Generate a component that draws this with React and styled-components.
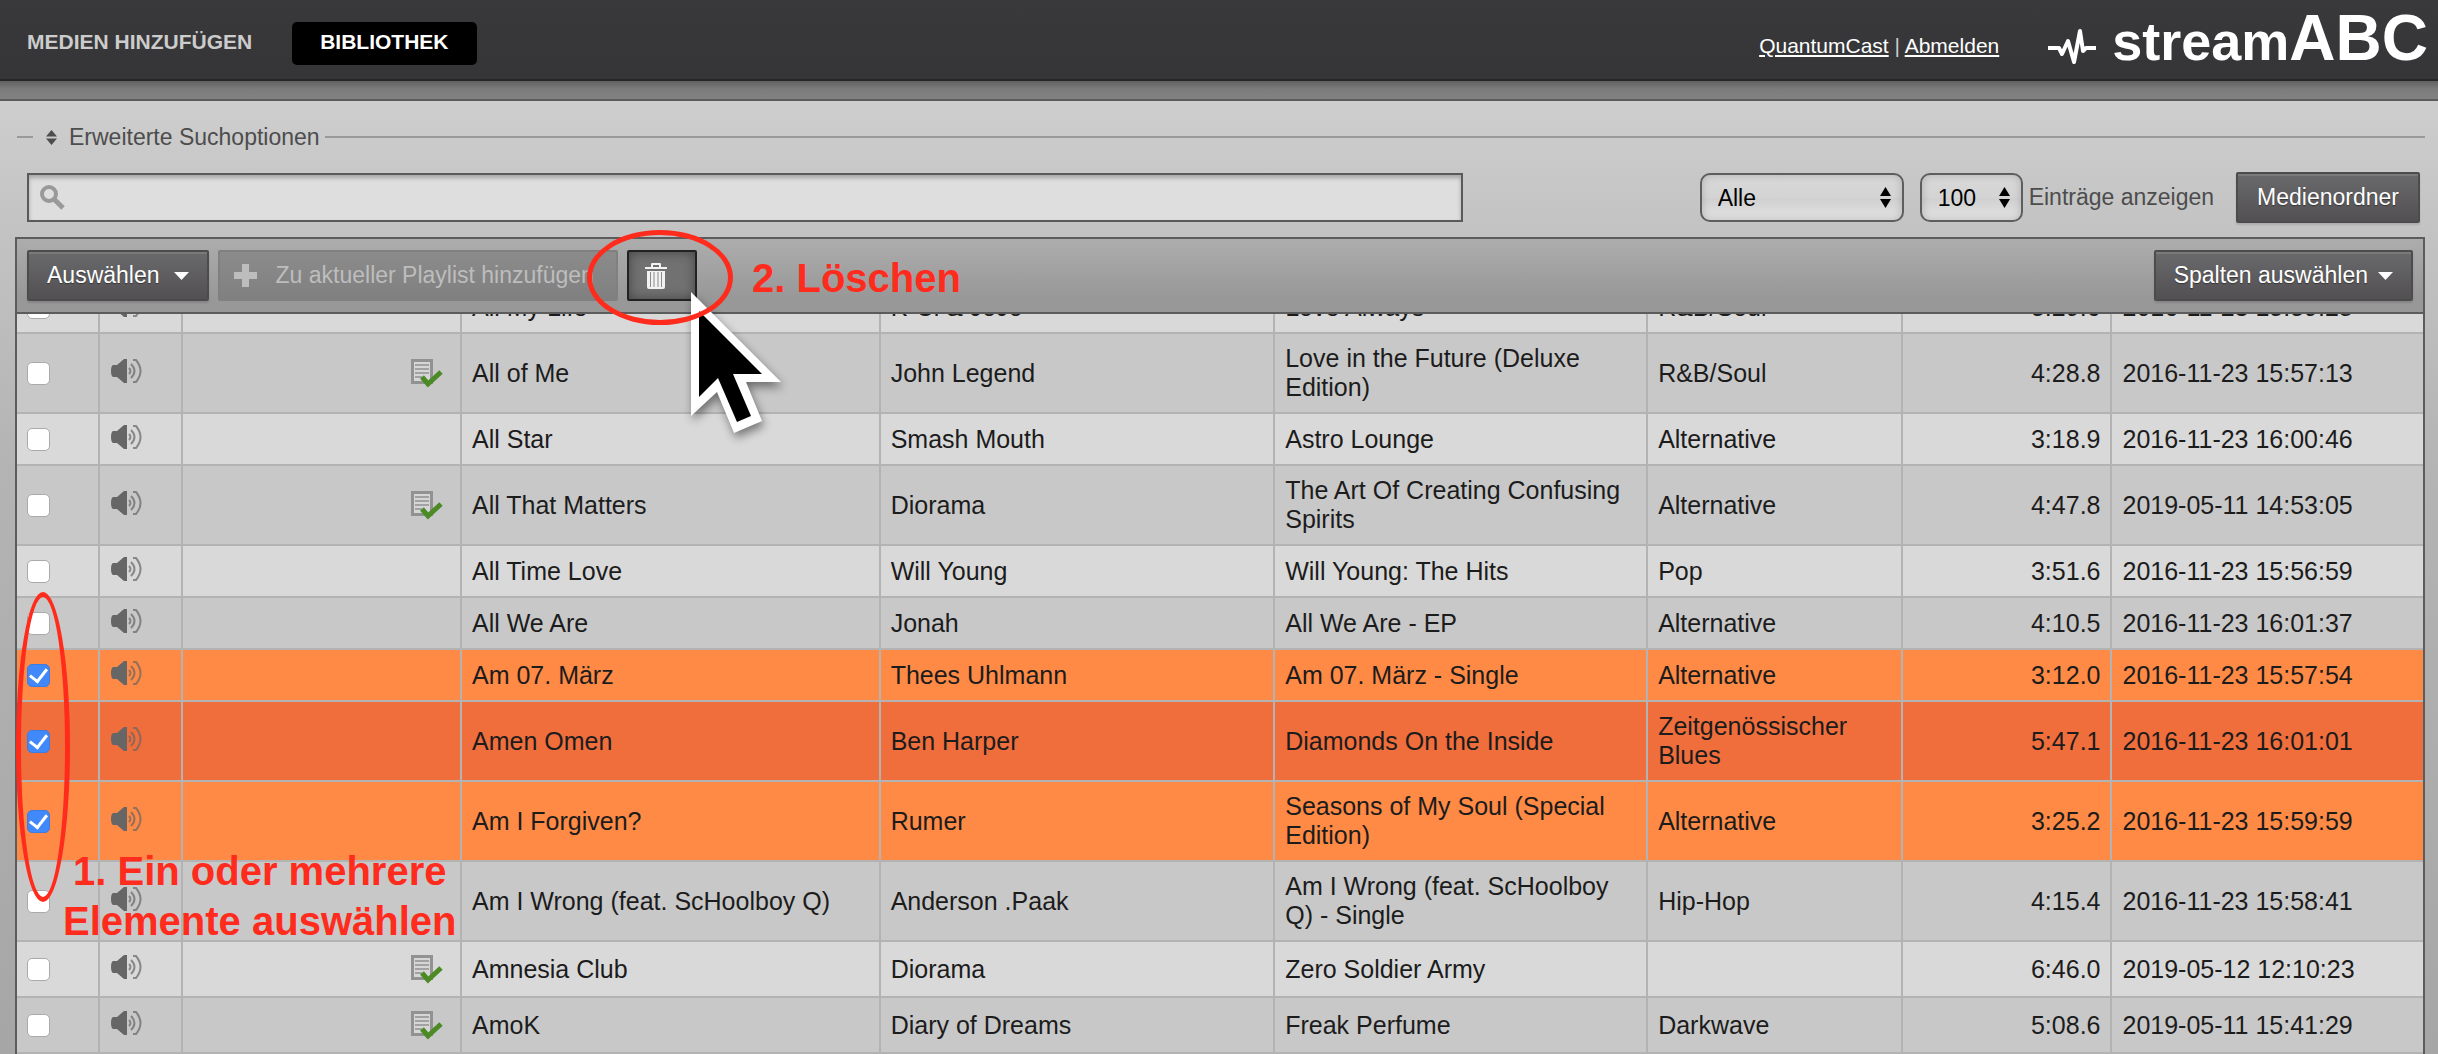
import styled, { createGlobalStyle } from "styled-components"
import { useLayoutEffect, useRef, useState } from "react"

const tracks = [
	{ title: "All My Life", artist: "K-Ci & JoJo", album: "Love Always", genre: "R&B/Soul", length: "5:29.6", added: "2016-11-23 15:59:28" },
	{ title: "All of Me", artist: "John Legend", album: "Love in the Future (Deluxe Edition)", genre: "R&B/Soul", length: "4:28.8", added: "2016-11-23 15:57:13", listed: true },
	{ title: "All Star", artist: "Smash Mouth", album: "Astro Lounge", genre: "Alternative", length: "3:18.9", added: "2016-11-23 16:00:46" },
	{ title: "All That Matters", artist: "Diorama", album: "The Art Of Creating Confusing Spirits", genre: "Alternative", length: "4:47.8", added: "2019-05-11 14:53:05", listed: true },
	{ title: "All Time Love", artist: "Will Young", album: "Will Young: The Hits", genre: "Pop", length: "3:51.6", added: "2016-11-23 15:56:59" },
	{ title: "All We Are", artist: "Jonah", album: "All We Are - EP", genre: "Alternative", length: "4:10.5", added: "2016-11-23 16:01:37" },
	{ title: "Am 07. März", artist: "Thees Uhlmann", album: "Am 07. März - Single", genre: "Alternative", length: "3:12.0", added: "2016-11-23 15:57:54" },
	{ title: "Amen Omen", artist: "Ben Harper", album: "Diamonds On the Inside", genre: "Zeitgenössischer Blues", length: "5:47.1", added: "2016-11-23 16:01:01" },
	{ title: "Am I Forgiven?", artist: "Rumer", album: "Seasons of My Soul (Special Edition)", genre: "Alternative", length: "3:25.2", added: "2016-11-23 15:59:59" },
	{ title: "Am I Wrong (feat. ScHoolboy Q)", artist: "Anderson .Paak", album: "Am I Wrong (feat. ScHoolboy Q) - Single", genre: "Hip-Hop", length: "4:15.4", added: "2016-11-23 15:58:41" },
	{ title: "Amnesia Club", artist: "Diorama", album: "Zero Soldier Army", genre: "", length: "6:46.0", added: "2019-05-12 12:10:23", listed: true },
	{ title: "AmoK", artist: "Diary of Dreams", album: "Freak Perfume", genre: "Darkwave", length: "5:08.6", added: "2019-05-11 15:41:29", listed: true },
	{ title: "", artist: "", album: "", genre: "", length: "", added: "" },
]

const columns = ["83px", "83px", "279px", "17.4%", "16.4%", "15.5%", "10.6%", "8.7%", "auto"]

function Pulse() {
	return (
		<svg width="50" height="36" viewBox="0 0 50 36" fill="none" stroke="#fff" strokeWidth="4" strokeLinejoin="round" aria-hidden="true">
			<path d="M1 20H12L15 26L21 13L27 34L33 3L36 23L39 20H49" />
		</svg>
	)
}

function Speaker() {
	return (
		<SpeakerIcon width="32" height="24" viewBox="0 0 32 24" aria-hidden="true">
			<path d="M3 6H7L14 0H17V24H14L7 18H3Q1 17 1 12Q1 7 3 6Z" fill="#666" />
			<g fill="none" stroke="#666" strokeWidth="2" opacity="0.7">
				<path d="M19 9Q22 12 19 15" />
				<path d="M21 5Q28 12 21 19" />
				<path d="M23 1H26Q35 12 26 23H23" />
			</g>
		</SpeakerIcon>
	)
}

function ListedIcon() {
	return (
		<svg width="40" height="34" viewBox="0 0 40 34" role="img" aria-label="In Playlist">
			<path d="M2.500 4.500H21.500V26.500H2.500Z" fill="#d6d6d6" stroke="#929292" strokeWidth="3" />
			<path d="M5 9H19M5 13H19M5 17H19M5 21H12" stroke="#a2a2a2" strokeWidth="2" />
			<path d="M12 21L18 28L31 16" fill="none" stroke="#4c8a26" strokeWidth="5" />
		</svg>
	)
}

function SortArrows({ width = 11, height = 21, gap = 3 }) {
	const half = (height - gap) / 2
	return (
		<svg width={width} height={height} viewBox={`0 0 ${width} ${height}`} fill="currentColor" aria-hidden="true">
			<path d={`M0 ${half}L${width / 2} 0L${width} ${half}Z`} />
			<path d={`M0 ${half + gap}L${width / 2} ${height}L${width} ${half + gap}Z`} />
		</svg>
	)
}

function Caret() {
	return (
		<svg width="15" height="8" viewBox="0 0 15 8" fill="#fff" aria-hidden="true">
			<path d="M0 0H15L7.500 8Z" />
		</svg>
	)
}

function Trash() {
	return (
		<svg width="22" height="26" viewBox="0 0 22 26" aria-hidden="true">
			<path d="M0 4H6V1Q6 0 7 0H15Q16 0 16 1V4H22V6H0ZM8 2V4H14V2Z" fill="#f2f2f2" fillRule="evenodd" />
			<path d="M2 8H20V24Q20 26 18 26H4Q2 26 2 24Z" fill="#f2f2f2" />
			<path d="M5.500 9V24M9 9V24M13 9V24M16.500 9V24" stroke="#8a8a8a" />
		</svg>
	)
}

function App() {
	const scroller = useRef(null)
	const [selected, setSelected] = useState([6, 7, 8])
	const [query, setQuery] = useState("")

	// the list is already scrolled a little, its first row is half under the toolbar
	useLayoutEffect(() => {
		scroller.current.scrollTop = 32
	}, [])

	function toggle(index) {
		setSelected(selected.includes(index) ? selected.filter(i => i !== index) : [...selected, index])
	}

	return (
		<Page>
			<GlobalStyle />
			<Header>
				<Nav>
					<NavLink href="#add">MEDIEN HINZUFÜGEN</NavLink>
					<NavLink href="#library" $active>BIBLIOTHEK</NavLink>
				</Nav>
				<User>
					<a href="#account">QuantumCast</a> | <a href="#logout">Abmelden</a>
				</User>
				<Logo>
					<Pulse />
					<LogoText>stream<b>ABC</b></LogoText>
				</Logo>
			</Header>
			<Strip />

			<Options>
				<Rule $short />
				<OptionsToggle type="button">
					<SortArrows width={11} height={15} gap={2} />
					Erweiterte Suchoptionen
				</OptionsToggle>
				<Rule />
			</Options>

			<SearchRow>
				<SearchBox>
					<svg width="25" height="25" viewBox="0 0 25 25" fill="none" stroke="#999" aria-hidden="true">
						<circle cx="9" cy="9" r="7" strokeWidth="4" />
						<path d="M14 14L23 23" strokeWidth="5" />
					</svg>
					<input type="text" aria-label="Suche" value={query} onChange={e => setQuery(e.target.value)} />
				</SearchBox>
				<Filters>
					<SelectBox>
						<Select aria-label="Filter" $width={204}>
							<option>Alle</option>
						</Select>
						<SortArrows />
					</SelectBox>
					<PageSize>
						<SelectBox>
							<Select id="page-size" $width={103}>
								<option>100</option>
							</Select>
							<SortArrows />
						</SelectBox>
						<label htmlFor="page-size">Einträge anzeigen</label>
					</PageSize>
					<Button type="button">Medienordner</Button>
				</Filters>
			</SearchRow>

			<Panel>
				<Toolbar>
					<Button type="button" $gap={14}>Auswählen <Caret /></Button>
					<AddButton type="button" disabled>
						<svg width="23" height="23" viewBox="0 0 23 23" fill="#bdbdbd" aria-hidden="true">
							<path d="M8 0H15V8H23V15H15V23H8V15H0V8H8Z" />
						</svg>
						Zu aktueller Playlist hinzufügen
					</AddButton>
					<TrashButton type="button" aria-label="Löschen"><Trash /></TrashButton>
					<Spacer />
					<Button type="button" $gap={10}>Spalten auswählen <Caret /></Button>
				</Toolbar>
				<Scroller ref={scroller}>
					<Table>
						<colgroup>
							{columns.map((width, i) => <Col key={i} $width={width} />)}
						</colgroup>
						<tbody>
							{tracks.map((track, i) => (
								<Row key={i} $selected={selected.includes(i)}>
									<td>
										<Check
											type="checkbox"
											aria-label={track.title || "Titel"}
											checked={selected.includes(i)}
											onChange={() => toggle(i)}
										/>
									</td>
									<td><Speaker /></td>
									<RightCell>{track.listed && <ListedIcon />}</RightCell>
									<td>{track.title}</td>
									<td>{track.artist}</td>
									<td>{track.album}</td>
									<td>{track.genre}</td>
									<RightCell>{track.length}</RightCell>
									<td>{track.added}</td>
								</Row>
							))}
						</tbody>
					</Table>
				</Scroller>
			</Panel>

			<Pointer width="110" height="160" viewBox="0 0 110 160" aria-hidden="true">
				<path d="M11 12L101 102H66L82 141L54 153L37 112L11 136Z" fill="#fff" />
				<path d="M19 31L82 94H53L71 136L57 142L38 98L19 117Z" fill="#000" />
			</Pointer>
			<Ring $left={587} $top={230} $width={146} $height={95} />
			<Ring $left={16} $top={592} $width={54} $height={310} />
			<Note $left={752} $top={253}>2. Löschen</Note>
			<Note $left={63} $top={846}>1. Ein oder mehrere<br />Elemente auswählen</Note>
		</Page>
	)
}

const GlobalStyle = createGlobalStyle`
	* {
		box-sizing: border-box;
	}

	body {
		margin: 0;
		font-family: "Liberation Sans", Arial, sans-serif;
		font-size: 23px;
	}

	button, input, select {
		font: inherit;
	}

	svg {
		flex: none;
	}
`

const Page = styled.div`
	position: relative;
	display: flex;
	flex-direction: column;
	height: 100vh;
	overflow: hidden;
	color: #4d4d4d;
	background: linear-gradient(#cecece 100px, #c2c2c2 240px, #b4b4b4 460px, #a6a6a6);
`

const Header = styled.header`
	display: flex;
	align-items: center;
	height: 81px;
	padding: 8px 10px 0 27px;
	background: linear-gradient(#39393b, #353537);
	border-bottom: 2px solid #262626;
`

const Nav = styled.nav`
	display: flex;
	gap: 40px;
`

const NavLink = styled.a`
	padding: ${p => p.$active ? "0 28px 3px" : "0 0 3px"};
	border-radius: 5px;
	color: ${p => p.$active ? "#fff" : "#ccc"};
	background: ${p => p.$active ? "#000" : "none"};
	font-size: 21px;
	font-weight: bold;
	line-height: 40px;
	text-decoration: none;
`

const User = styled.div`
	margin-left: auto;
	padding-top: 4px;
	color: #ccc;
	font-size: 21px;

	a {
		color: #fff;
		text-underline-offset: 2px;
	}
`

const Logo = styled.div`
	display: flex;
	align-items: center;
	gap: 15px;
	margin-left: 48px;
	padding-bottom: 8px;
	color: #fff;

	svg {
		margin-top: 12px;
	}
`

const LogoText = styled.div`
	font-size: 54px;
	font-weight: bold;
	line-height: 64px;

	b {
		font-size: 64px;
	}
`

const Strip = styled.div`
	height: 20px;
	background: linear-gradient(#626262, #7c7c7c 8px, #828282);
	border-bottom: 2px solid #5c5c5c;
`

const Options = styled.div`
	display: flex;
	align-items: center;
	gap: 5px;
	padding: 22px 13px 0 17px;
`

const Rule = styled.div`
	flex: ${p => p.$short ? "0 0 16px" : "1"};
	height: 2px;
	background: #999;
`

const OptionsToggle = styled.button`
	display: flex;
	align-items: center;
	gap: 12px;
	padding: 0 0 0 8px;
	border: 0;
	color: #4d4d4d;
	background: none;
	line-height: 28px;
`

const SearchRow = styled.div`
	display: flex;
	align-items: center;
	justify-content: space-between;
	padding: 21px 18px 14px 27px;
`

const SearchBox = styled.div`
	display: flex;
	align-items: center;
	gap: 8px;
	width: 60%;
	height: 49px;
	padding: 0 11px;
	background: #dedede;
	border: 2px solid #5a5a5a;
	box-shadow: inset 0 3px 4px rgba(0, 0, 0, 0.25);

	input {
		flex: 1;
		border: 0;
		outline: 0;
		background: none;
	}
`

const Filters = styled.div`
	display: flex;
	align-items: center;
	gap: 16px;

	> button {
		margin-left: 6px;
		padding: 0 19px;
	}
`

const PageSize = styled.div`
	display: flex;
	align-items: center;
	gap: 6px;
`

const SelectBox = styled.div`
	display: grid;
	align-items: center;
	color: #000;

	> * {
		grid-area: 1 / 1;
	}

	svg {
		justify-self: end;
		margin-right: 13px;
		pointer-events: none;
	}
`

const Select = styled.select`
	appearance: none;
	width: ${p => p.$width}px;
	height: 49px;
	padding: 0 16px;
	border: 2px solid #5e5e5e;
	border-radius: 10px;
	color: #000;
	background: linear-gradient(#d8d8d8, #d4d4d4 50%, #cfcfcf 50%, #e4e4e4);
	box-shadow: inset 0 0 8px rgba(0, 0, 0, 0.18);
`

const Button = styled.button`
	display: flex;
	align-items: center;
	gap: ${p => p.$gap || 0}px;
	height: 51px;
	padding: 0 18px;
	border: 2px solid #4c4c4c;
	border-radius: 2px;
	color: #fff;
	background: linear-gradient(#6a696b, #525052);
	box-shadow: inset 0 2px 0 #7a7a7a, 0 2px 2px rgba(0, 0, 0, 0.12);
	text-shadow: 0 1px 1px rgba(0, 0, 0, 0.4);
	white-space: nowrap;
`

const AddButton = styled(Button)`
	gap: 19px;
	padding: 0 22px 0 14px;
	border-color: #808080;
	color: #bdbdbd;
	background: linear-gradient(#8b8b8b, #808080);
	box-shadow: none;
	text-shadow: none;
`

const TrashButton = styled(Button)`
	width: 70px;
	padding: 0 16px;
	border-color: #222;
	background: #717171;
	box-shadow: inset 0 0 12px rgba(0, 0, 0, 0.4);
`

const Spacer = styled.div`
	flex: 1;
`

const Panel = styled.main`
	display: flex;
	flex: 1;
	flex-direction: column;
	min-height: 0;
	margin: 0 13px 0 15px;
	border: 2px solid #5c5c5c;
	border-bottom: 0;
`

const Toolbar = styled.div`
	display: flex;
	align-items: center;
	gap: 9px;
	height: 75px;
	flex: none;
	padding: 0 10px;
	background: linear-gradient(#adadad, #989898 80%);
	border-bottom: 2px solid #5c5c5c;
`

const Scroller = styled.div`
	flex: 1;
	min-height: 0;
	overflow-y: auto;
	scrollbar-width: none;
`

const Table = styled.table`
	width: 100%;
	table-layout: fixed;
	border-collapse: separate;
	border-spacing: 0;
	color: #1c1c1c;
	font-size: 25px;
	line-height: 29px;

	td {
		height: 52px;
		padding: 10px;
		border: solid #b3b3b3;
		border-width: 0 2px 2px 0;
		vertical-align: middle;
	}

	td:last-child {
		border-right: 0;
	}

	svg {
		display: block;
	}
`

const Col = styled.col`
	width: ${p => p.$width};
`

const Row = styled.tr`
	background: ${p => p.$selected ? "#ff8a45" : "#d9d9d9"};

	&:nth-child(even) {
		background: ${p => p.$selected ? "#f06e3c" : "#c8c8c8"};
	}
`

const RightCell = styled.td`
	text-align: right;

	svg {
		margin-left: auto;
	}
`

const SpeakerIcon = styled.svg`
	margin-bottom: 4px;
`

const Check = styled.input`
	appearance: none;
	display: grid;
	place-items: center;
	width: 23px;
	height: 23px;
	margin: 0;
	border: 1px solid #aaa;
	border-radius: 5px;
	background: #fff;

	&:checked {
		border-color: #3b7de0;
		background: #4189fa;
	}

	&:checked::before {
		content: "";
		width: 8px;
		height: 14px;
		margin-bottom: 4px;
		border: solid #fff;
		border-width: 0 3px 3px 0;
		transform: rotate(38deg);
	}
`

const Pointer = styled.svg`
	position: absolute;
	left: 680px;
	top: 280px;
	filter: drop-shadow(2px 5px 5px rgba(0, 0, 0, 0.45));
	pointer-events: none;
`

const Ring = styled.div`
	position: absolute;
	left: ${p => p.$left}px;
	top: ${p => p.$top}px;
	width: ${p => p.$width}px;
	height: ${p => p.$height}px;
	border: 5px solid #ff2b1c;
	border-radius: 50%;
	pointer-events: none;
`

const Note = styled.div`
	position: absolute;
	left: ${p => p.$left}px;
	top: ${p => p.$top}px;
	color: #ff2b1c;
	font-size: 40px;
	font-weight: bold;
	line-height: 50px;
	text-align: center;
	white-space: nowrap;
	pointer-events: none;
`

export default App
